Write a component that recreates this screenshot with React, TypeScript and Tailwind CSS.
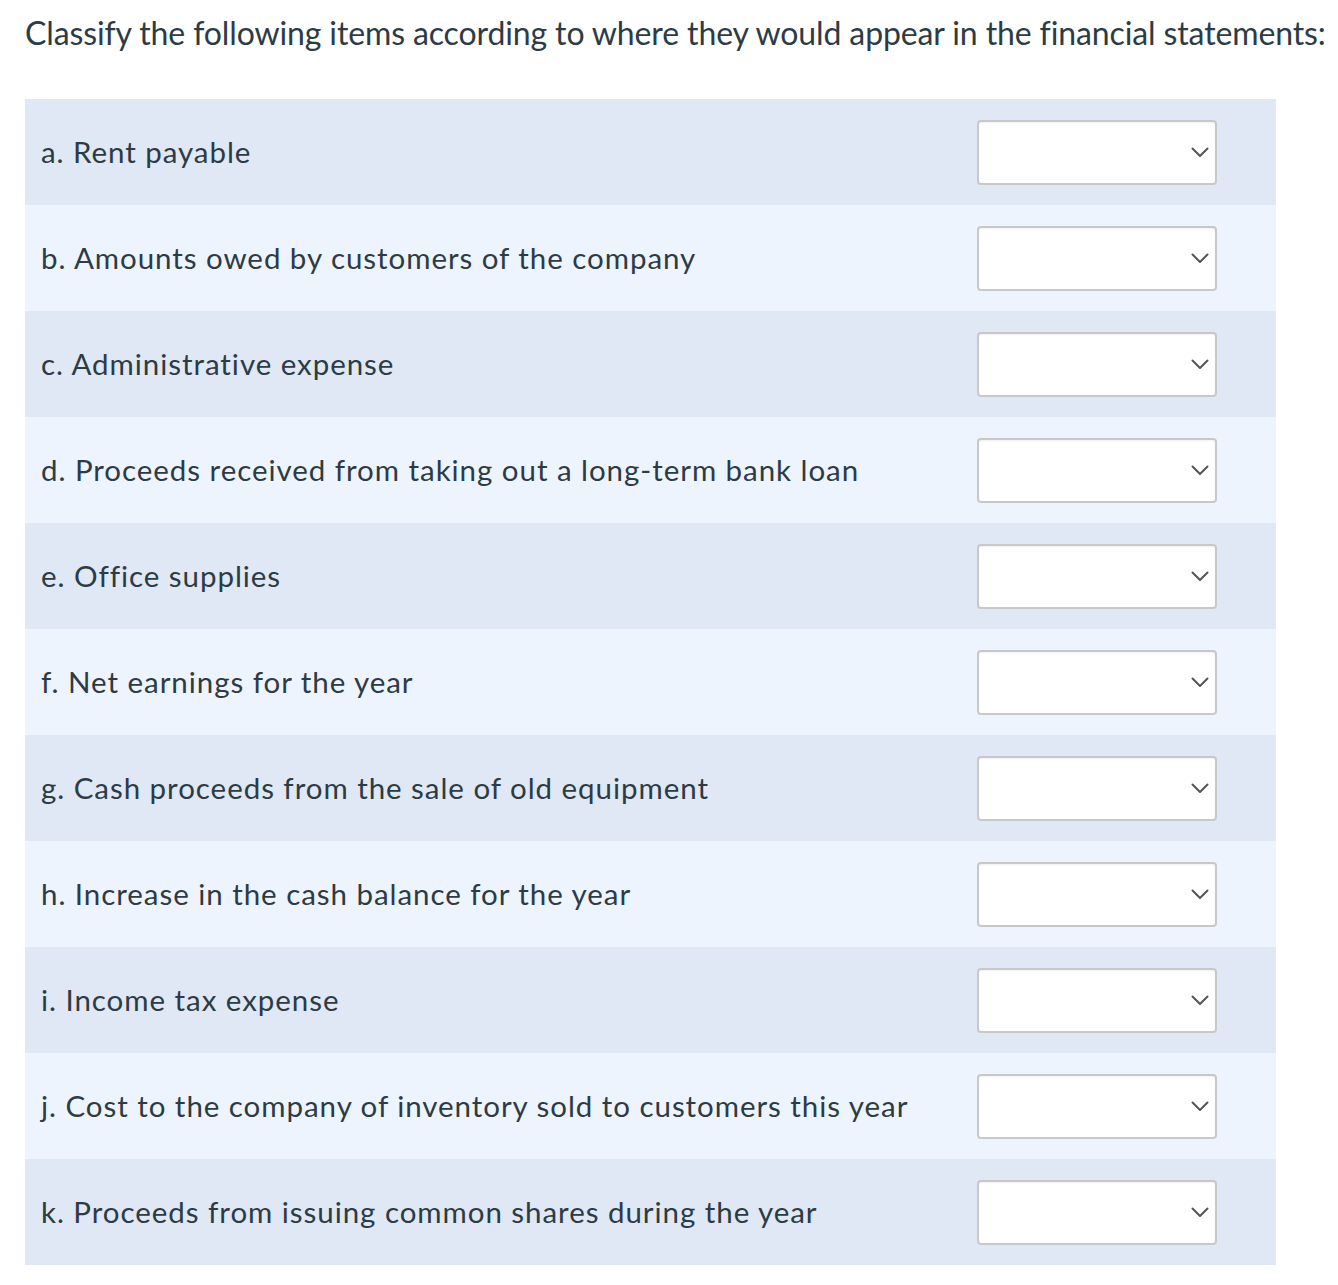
const ITEMS = [
  "a. Rent payable",
  "b. Amounts owed by customers of the company",
  "c. Administrative expense",
  "d. Proceeds received from taking out a long-term bank loan",
  "e. Office supplies",
  "f. Net earnings for the year",
  "g. Cash proceeds from the sale of old equipment",
  "h. Increase in the cash balance for the year",
  "i. Income tax expense",
  "j. Cost to the company of inventory sold to customers this year",
  "k. Proceeds from issuing common shares during the year",
];

function Chevron() {
  return (
    <svg width="18" height="11" viewBox="0 0 18 11" fill="none" className="text-[#555]">
      <polyline points="1.5,1.5 9,9 16.5,1.5" stroke="currentColor" strokeWidth="2" strokeLinecap="round" strokeLinejoin="round" />
    </svg>
  );
}

export default function App() {
  return (
    <div className="min-h-[1285px] w-[1338px] bg-white font-['Lato','Open_Sans',sans-serif] text-[#2d3b45]">
      <div className="pl-[25px] pt-[14px] text-[32px] leading-[38px] tracking-[-0.12px] whitespace-nowrap">
        Classify the following items according to where they would appear in the financial statements:
      </div>

      <div className="ml-[25px] mt-[47px] w-[1251px]">
        {ITEMS.map((item, i) => (
          <div
            key={i}
            className={`flex h-[106px] items-center justify-between pl-[16px] pr-[59px] ${
              i % 2 === 0 ? "bg-[#dfe8f4]" : "bg-[#edf4fd]"
            }`}
          >
            <span className="text-[29.5px] leading-[34px] tracking-[0.95px]">{item}</span>
            <div className="flex h-[65px] w-[240px] items-center justify-end rounded-[4px] border-2 border-[#c8c8c8] bg-white pr-[6px] shadow-[inset_0_1px_2px_rgba(0,0,0,0.06)]">
              <Chevron />
            </div>
          </div>
        ))}
      </div>
    </div>
  );
}
